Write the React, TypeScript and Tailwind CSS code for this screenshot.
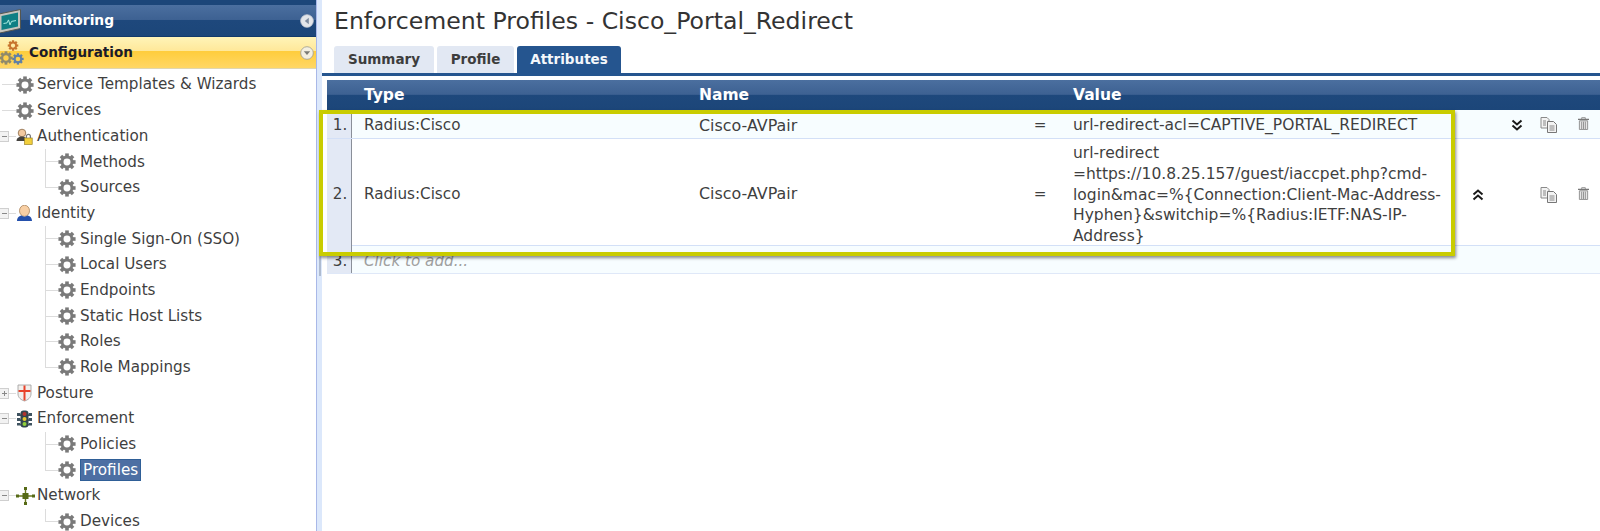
import React from "react";

const font = "font-['DejaVu_Sans','Liberation_Sans',sans-serif]";

function Gear({ size = 18, color = "#7a7a7a", hole = "#ffffff" }: { size?: number; color?: string; hole?: string }) {
  const teeth = [0, 45, 90, 135, 180, 225, 270, 315];
  return (
    <svg width={size} height={size} viewBox="0 0 17 17" className="shrink-0">
      {teeth.map((a) => (
        <rect key={a} x="6.800" y="0.400" width="3.400" height="4" fill={color} transform={`rotate(${a} 8.500 8.500)`} />
      ))}
      <circle cx="8.500" cy="8.500" r="4.700" fill={hole} stroke={color} strokeWidth="2.800" />
    </svg>
  );
}

function Expander({ plus = false }: { plus?: boolean }) {
  return (
    <span className="flex h-[11px] w-[9px] shrink-0 items-center justify-center border border-l-0 border-[#cfcfcf] bg-[#f2f2f2]">
      <svg width="7" height="7" viewBox="0 0 7 7">
        <path d={plus ? "M1 3.500h5M3.500 1v5" : "M1 3.500h5"} stroke="#888" strokeWidth="1" />
      </svg>
    </span>
  );
}

const AuthIcon = () => (
  <svg width="17" height="17" viewBox="0 0 17 17" className="shrink-0">
    <circle cx="6" cy="5" r="3.800" fill="#f2c9a0" stroke="#8a6a48" strokeWidth="0.800" />
    <path d="M0.500 13c0-3 2.500-4.500 5.500-4.500s5 1.500 5 4.500z" fill="#44423e" />
    <rect x="8.600" y="10" width="7.600" height="6.400" fill="#f2cf3c" stroke="#9c8320" strokeWidth="0.700" />
    <path d="M10.400 10V8.400a2 2 0 014 0V10" fill="none" stroke="#777" strokeWidth="1.200" />
  </svg>
);
const PersonIcon = () => (
  <svg width="17" height="17" viewBox="0 0 17 17" className="shrink-0">
    <ellipse cx="8.500" cy="5.800" rx="5" ry="5.600" fill="#f8cfa4" stroke="#a88258" strokeWidth="0.800" />
    <path d="M1 16c0-3.400 2.400-5 4.500-5.400 1.800 1.500 4.200 1.500 6 0 2.100.4 4.500 2 4.500 5.400z" fill="#2450ac" />
  </svg>
);
const ShieldIcon = () => (
  <svg width="17" height="18" viewBox="0 0 17 18" className="shrink-0">
    <path d="M2 1h13v9c0 3.500-3 6-6.500 7C5 16 2 13.500 2 10z" fill="#f2efec" stroke="#a5a5a5" strokeWidth="0.900" />
    <path d="M8.500 1.500V16.500M2.500 7h12" stroke="#e8432a" strokeWidth="2" />
  </svg>
);
const TrafficIcon = () => (
  <svg width="17" height="18" viewBox="0 0 17 18" className="shrink-0">
    <path d="M1 3h3l1.500 3H1zM16 3h-3l-1.500 3H16zM1 8h3l1.500 3H1zM16 8h-3l-1.500 3H16zM1 13h3l1.500 2.500H1zM16 13h-3l-1.500 2.500H16z" fill="#3f5360" />
    <rect x="4.500" y="0.500" width="8" height="17" rx="3" fill="#33464f" />
    <circle cx="8.500" cy="4" r="2" fill="#b3352e" />
    <circle cx="8.500" cy="9" r="2" fill="#e6c92f" />
    <circle cx="8.500" cy="14" r="2" fill="#8fd03a" />
  </svg>
);
const NetworkIcon = () => (
  <svg width="19" height="18" viewBox="0 0 19 18" className="shrink-0">
    <path d="M1 9h17M9.500 1v16" stroke="#6a7a1e" strokeWidth="1.400" />
    <rect x="6.500" y="6" width="6" height="6" fill="#566a16" />
    <rect x="0" y="7.500" width="3" height="3" fill="#566a16" />
    <rect x="16" y="7.500" width="3" height="3" fill="#566a16" />
    <rect x="8" y="0" width="3" height="3" fill="#566a16" />
    <rect x="8" y="15" width="3" height="3" fill="#566a16" />
  </svg>
);

const MonitorIcon = () => (
  <svg width="21" height="24" viewBox="0 0 21 24" className="shrink-0">
    <path d="M-1 5L20.500 0.500V19.500L0 24H-1z" fill="#c4c4be" stroke="#55564f" strokeWidth="1" />
    <path d="M1.500 7L18 3.500V17.500L1.500 21z" fill="#0f7f84" />
    <path d="M3.500 14.500l3.500-.6 1.500-3 1.500 5 1.500-3.500 4.500-.8" fill="none" stroke="#a8ece2" strokeWidth="1" />
  </svg>
);
const ConfigIcon = () => (
  <svg width="24" height="26" viewBox="0 0 24 26" className="shrink-0">
    <g transform="translate(7.500 0) scale(0.650)"><GearInner color="#c8752e" /></g>
    <g transform="translate(-1 11) scale(0.820)"><GearInner color="#8f8a6c" /></g>
    <g transform="translate(12 13) scale(0.700)"><GearInner color="#5f7fa8" /></g>
  </svg>
);
function GearInner({ color }: { color: string }) {
  return (
    <>
      {[0, 45, 90, 135, 180, 225, 270, 315].map((a) => (
        <rect key={a} x="6.800" y="0.400" width="3.400" height="4" fill={color} transform={`rotate(${a} 8.500 8.500)`} />
      ))}
      <circle cx="8.500" cy="8.500" r="4.700" fill="none" stroke={color} strokeWidth="2.800" />
    </>
  );
}

const CircleBtn = ({ down = false }: { down?: boolean }) => (
  <svg width="14" height="14" viewBox="0 0 14 14" className="shrink-0">
    <circle cx="7" cy="7" r="6.300" fill={down ? "#f3efe0" : "#e4e6ea"} stroke={down ? "#9a9a90" : "#c8ccd4"} strokeWidth="0.800" />
    <path d={down ? "M3.800 5.200h6.400L7 9z" : "M8.800 3.800v6.400L4.800 7z"} fill={down ? "#7b7b76" : "#7f8ca0"} />
  </svg>
);

type Child = { label: string; active?: boolean };

function ChildRow({ label, active, last }: Child & { last?: boolean }) {
  return (
    <div className="flex h-[25.700px] items-center">
      <span className="relative flex h-full w-[13px] shrink-0 items-center">
        <span className={`absolute left-0 top-0 w-px bg-[#dcdcdc] ${last ? "h-1/2" : "h-full"}`} />
        <span className="h-px w-full bg-[#dcdcdc]" />
      </span>
      <Gear />
      {active ? (
        <span className="ml-[4px] flex h-[22px] items-center border border-[#2f5f97] bg-[#4d6fa3] px-[2px] text-white">{label}</span>
      ) : (
        <span className="ml-[4px]">{label}</span>
      )}
    </div>
  );
}

function RootRow({ label, icon, exp }: { label: string; icon: React.ReactNode; exp?: "plus" | "minus" }) {
  return (
    <div className="flex h-[25.700px] items-center">
      {exp ? <Expander plus={exp === "plus"} /> : <span className="w-[2px] shrink-0" />}
      <span className={`h-px shrink-0 bg-[#dcdcdc] ${exp ? "w-[7px]" : "w-[14px]"}`} />
      <span className="flex w-[21px] shrink-0 items-center">{icon}</span>
      <span>{label}</span>
    </div>
  );
}

function Group({ items }: { items: Child[] }) {
  return (
    <div className="ml-[45px]">
      {items.map((c, i) => (
        <ChildRow key={c.label} {...c} last={i === items.length - 1} />
      ))}
    </div>
  );
}

const CopyIcon = () => (
  <svg width="18" height="16" viewBox="0 0 18 16">
    <path d="M1 .5h6l2 2V11H1z" fill="#f3f3f3" stroke="#8a8a8a" />
    <path d="M7.500 4.500h6l3 3v8h-9z" fill="#f3f3f3" stroke="#777" />
    <path d="M9.500 9h5M9.500 11h5M9.500 13h5M3 4h3M3 6h3M3 8h3" stroke="#888" />
  </svg>
);
const TrashIcon = () => (
  <svg width="11" height="13" viewBox="0 0 12 14">
    <path d="M0 2.500h12" stroke="#777" strokeWidth="1.400" />
    <path d="M4 2V.700h4V2" fill="none" stroke="#888" />
    <path d="M1.500 4h9v9.500h-9z" fill="#e6e6e6" stroke="#8c8c8c" />
    <path d="M4 5v8M6 5v8M8 5v8" stroke="#8c8c8c" />
  </svg>
);
const Chevrons = ({ up = false }: { up?: boolean }) => (
  <svg width="12" height="12" viewBox="0 0 12 12">
    <path
      d={up ? "M1.500 5.500L6 1.500l4.500 4M1.500 10.500L6 6.500l4.500 4" : "M1.500 1.500L6 5.500l4.500-4M1.500 6.500L6 10.500l4.500-4"}
      fill="none"
      stroke="#1a1a1a"
      strokeWidth="2"
    />
  </svg>
);

function Row({ n, h, bg, valueW, value, up, pt, valuePt }: { n: number; h: string; bg: string; valueW: string; value: React.ReactNode; up?: boolean; pt: string; valuePt: string }) {
  return (
    <div className={`grid grid-cols-[25px_347px_330px_22px_22px_1fr] items-center border-b border-[#d3e0f7] ${h} ${bg}`}>
      <div className={`flex h-full items-center justify-center border-r border-[#8a8f99] bg-[#e3e9f5] pl-[2px] ${pt}`}>{n}.</div>
      <div className={`pl-3 ${pt}`}>Radius:Cisco</div>
      <div className={`text-[15.900px] ${pt}`}>Cisco-AVPair</div>
      <div className={`text-center ${pt}`}>=</div>
      <div />
      <div className={`flex items-center ${valuePt}`}>
        <div className={`${valueW} shrink-0 whitespace-nowrap text-[15.500px] leading-[20.800px]`}>{value}</div>
        <div className="flex w-[30px] shrink-0 justify-center"><Chevrons up={up} /></div>
        <div className="ml-auto flex">
          <div className="flex w-[34px] justify-center"><CopyIcon /></div>
          <div className="flex w-[34px] justify-center"><TrashIcon /></div>
        </div>
      </div>
    </div>
  );
}

export default function App() {
  return (
    <div className={`${font} flex h-[531px] w-[1600px] overflow-hidden bg-white text-[15.200px] text-[#3f3f3f]`}>
      <aside className="w-[316px] shrink-0 overflow-hidden">
        <div className="h-[5px] bg-[#1c4679]" />
        <div className="flex h-[32px] items-center border-b border-[#123a6b] bg-[linear-gradient(#4b6f9f_0%,#3d6192_48%,#1e487c_50%,#1c4679_100%)] pr-[2px]">
          <span className="flex w-[29px] shrink-0 items-center"><MonitorIcon /></span>
          <span className="flex-1 text-[13.800px] font-bold text-white">Monitoring</span>
          <CircleBtn />
        </div>
        <div className="flex h-[32px] items-center border-b border-[#e0d6b0] bg-[linear-gradient(#fff4b8_0%,#ffe89a_44%,#ffcd3c_46%,#ffd765_100%)] pr-[2px]">
          <span className="flex w-[29px] shrink-0 items-center"><ConfigIcon /></span>
          <span className="flex-1 text-[13.500px] font-bold text-[#1b1b2a]">Configuration</span>
          <CircleBtn down />
        </div>
        <div className="pt-[3px]">
          <RootRow label="Service Templates & Wizards" icon={<Gear />} />
          <RootRow label="Services" icon={<Gear />} />
          <RootRow label="Authentication" icon={<AuthIcon />} exp="minus" />
          <Group items={[{ label: "Methods" }, { label: "Sources" }]} />
          <RootRow label="Identity" icon={<PersonIcon />} exp="minus" />
          <Group items={[{ label: "Single Sign-On (SSO)" }, { label: "Local Users" }, { label: "Endpoints" }, { label: "Static Host Lists" }, { label: "Roles" }, { label: "Role Mappings" }]} />
          <RootRow label="Posture" icon={<ShieldIcon />} exp="plus" />
          <RootRow label="Enforcement" icon={<TrafficIcon />} exp="minus" />
          <Group items={[{ label: "Policies" }, { label: "Profiles", active: true }]} />
          <RootRow label="Network" icon={<NetworkIcon />} exp="minus" />
          <Group items={[{ label: "Devices" }]} />
        </div>
      </aside>

      <div className="flex w-[6px] shrink-0 items-center justify-center border-l border-[#a9b8e8] bg-[#dce8fb]">
        <span className="h-[21px] w-[2px] bg-[#aebbd0]" />
      </div>

      <main className="min-w-0 flex-1">
        <h1 className="ml-[12px] flex h-[46px] items-center pb-[3px] text-[23.600px] font-normal leading-none text-[#333]">
          Enforcement Profiles - Cisco_Portal_Redirect
        </h1>
        <div className="flex gap-[3px] border-b-[3px] border-[#25558f] pl-[12px]">
          <div className="flex h-[27px] w-[100px] items-center justify-center rounded-t-[3px] bg-[#e2e8f3] text-[13.500px] font-bold text-[#3d3d3d]">Summary</div>
          <div className="flex h-[27px] w-[77px] items-center justify-center rounded-t-[3px] bg-[#e2e8f3] text-[13.500px] font-bold text-[#3d3d3d]">Profile</div>
          <div className="flex h-[27px] w-[104px] items-center justify-center rounded-t-[3px] bg-[#25558f] text-[13.500px] font-bold text-[#f4f7fb]">Attributes</div>
        </div>
        <div className="relative ml-[5px] mt-[4px]">
          <div className="grid h-[30px] grid-cols-[25px_347px_374px_1fr] items-center bg-[linear-gradient(#4b6f9f_0%,#3d6192_48%,#1e487c_50%,#1c4679_100%)] pt-[2px] text-[15.500px] font-bold text-white">
            <div />
            <div className="pl-3">Type</div>
            <div>Name</div>
            <div>Value</div>
          </div>
          <Row n={1} h="h-[29px]" pt="pt-[3px]" valuePt="pt-[3px]" bg="bg-[#f7fdff]" valueW="w-[429px]" value="url-redirect-acl=CAPTIVE_PORTAL_REDIRECT" />
          <Row
            n={2}
            h="h-[107px]"
            pt="pt-[2px]"
            valuePt="pt-[4px]"
            bg="bg-white"
            valueW="w-[390px]"
            up
            value={
              <>
                url-redirect<br />
                =https://10.8.25.157/guest/iaccpet.php?cmd-<br />
                login&amp;mac=%{"{"}Connection:Client-Mac-Address-<br />
                Hyphen{"}"}&amp;switchip=%{"{"}Radius:IETF:NAS-IP-<br />
                Address{"}"}
              </>
            }
          />
          <div className="grid h-[28px] grid-cols-[25px_1fr] items-center border-b border-[#dfe8f8] bg-[#f7fdff]">
            <div className="flex h-full items-center justify-center border-r border-[#8a8f99] bg-[#e3e9f5] pl-[2px] pt-[3px]">3.</div>
            <div className="pl-3 pt-[3px] italic text-[#a0a0a0]">Click to add...</div>
          </div>
          <div className="pointer-events-none absolute left-[-8px] top-[30px] h-[146px] w-[1136px] border-4 border-[#c9cc00] shadow-[1px_2px_3px_rgba(0,0,0,0.45)]" />
        </div>
      </main>
    </div>
  );
}
